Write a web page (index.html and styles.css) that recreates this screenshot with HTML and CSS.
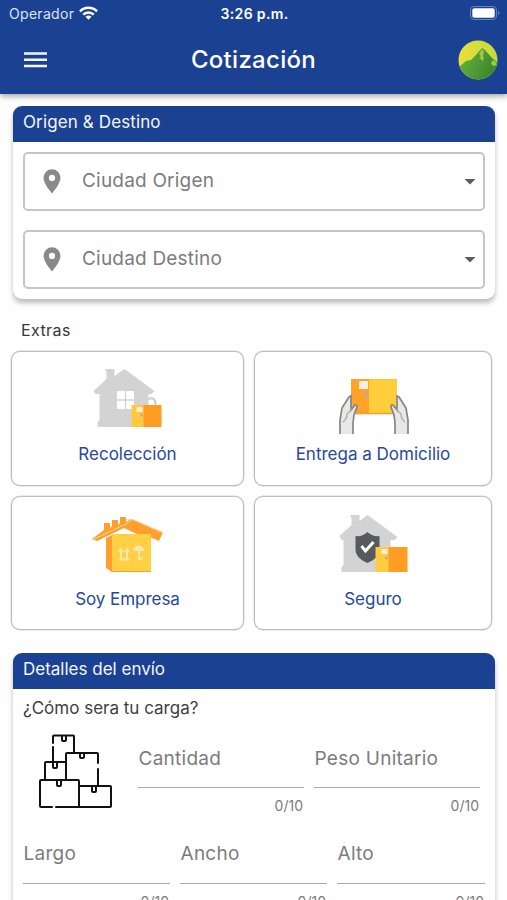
FILE: index.html
```html
<!DOCTYPE html>
<html lang="es">
<head>
<meta charset="utf-8">
<meta name="viewport" content="width=device-width, initial-scale=1">
<title>Cotización</title>
<link rel="stylesheet" href="styles.css">
</head>
<body>
<header class="top">
  <div class="status">
    <div class="carrier"><span>Operador</span>
      <svg class="wifi" width="19" height="14" viewBox="0 0 19 14" fill="none" stroke="#fff" stroke-width="2.5"><path d="M1 5.300C5.500.6 13.500.6 18 5.300"/><path d="M4.200 8.600c2.900-2.900 7.700-2.900 10.600 0"/><path d="M6.500 10.700q3-2.500 6 0l-3 3.100z" fill="#fff" stroke="none"/></svg>
    </div>
    <span class="time">3:26 p.m.</span>
    <svg class="battery" width="30" height="14" viewBox="0 0 30 14"><rect x=".5" y=".5" width="26" height="13" rx="3.500" fill="none" stroke="#6582bd"/><rect x="2.300" y="2.300" width="22.400" height="9.400" rx="2" fill="#fff"/><path d="M28 5v4q1.500-.5 1.500-2T28 5z" fill="#6582bd"/></svg>
  </div>
  <div class="bar">
    <svg class="menu" width="23" height="16" viewBox="0 0 23 16" fill="#f4f7fd"><path d="M0 .3h23v2.500H0zM0 6.500h23V9H0zM0 12.700h23v2.500H0z"/></svg>
    <h1>Cotización</h1>
    <svg class="avatar" width="40" height="40" viewBox="0 0 40 40"><defs><clipPath id="disc"><circle cx="20" cy="20" r="19.500"/></clipPath><linearGradient id="hill" x1="0" y1="0" x2="1" y2=".3"><stop offset="0" stop-color="#69b63f"/><stop offset="1" stop-color="#3d862e"/></linearGradient><linearGradient id="sky" x1="0" y1="0" x2="1" y2="0"><stop offset="0" stop-color="#e8df3d"/><stop offset="1" stop-color="#c3d93c"/></linearGradient></defs><g clip-path="url(#disc)"><path fill="url(#sky)" d="M0 0h40v40H0z"/><path fill="url(#hill)" d="M0 28l8-7 5-1 4-4 7-8 3 2 7 8 6 5v17H0z"/><path fill="#a0ca45" d="M24 9l-3 5 2 2-2 2 2 1 1 2 2-2-1-3 1-4zM35 20l-2 3 2 3 4-1-1-3z"/></g></svg>
  </div>
</header>
<main>
  <section class="card route">
    <h2>Origen &amp; Destino</h2>
    <div class="selects">
      <div class="select"><svg width="18" height="25" viewBox="0 0 18 25"><path fill="#898989" fill-rule="evenodd" d="M9 .3A8.500 8.500 0 0 0 .5 8.800C.5 15 9 24.500 9 24.500S17.500 15 17.500 8.800A8.500 8.500 0 0 0 9 .3zm0 5.500a3.100 3.100 0 1 1 0 6.200 3.100 3.100 0 0 1 0-6.200z"/></svg><span class="field-text origin">Ciudad Origen</span><i class="arrow"></i></div>
      <div class="select"><svg width="18" height="25" viewBox="0 0 18 25"><path fill="#898989" fill-rule="evenodd" d="M9 .3A8.500 8.500 0 0 0 .5 8.800C.5 15 9 24.500 9 24.500S17.500 15 17.500 8.800A8.500 8.500 0 0 0 9 .3zm0 5.500a3.100 3.100 0 1 1 0 6.200 3.100 3.100 0 0 1 0-6.200z"/></svg><span class="field-text destination">Ciudad Destino</span><i class="arrow"></i></div>
    </div>
  </section>

  <h3 class="extras-title">Extras</h3>
  <section class="tiles">
    <div class="tile">
      <svg width="100" height="80" viewBox="-2.500 0 100 80"><path fill="#d3d3d3" d="M17 71v-5l2-2V38h-4l-2-3 13-12v-7l-1-1v-2h9v7l10-7 30 22-3 3h-3v33z"/><path fill="#fff" d="M36.500 35h17v18h-17z"/><path d="M45 35v18M36.500 44h17" stroke="#d3d3d3" stroke-width="1.300"/><path d="M68 43q7-3 7 6" fill="none" stroke="#cacaca" stroke-width="2"/><path fill="#ffc83e" d="M51 49h12v22H51z"/><path fill="#ff9d22" d="M63 49h18v22H63z"/><path fill="#f5eedc" d="M56 51h6v5h-6z"/><circle cx="61" cy="59" r="1.500" fill="#bdae90"/></svg>
      <span>Recolección</span>
    </div>
    <div class="tile">
      <svg width="100" height="80" viewBox="-2 -19 100 80"><path fill="#ffa329" d="M26 4h19v35H26z"/><path fill="#ffce3c" d="M44 4h28v35H44z"/><path stroke="#ff9c2c" stroke-width="1.500" d="M26 38.500h46"/><path stroke="#f3bd31" stroke-dasharray="3 2" d="M45 4.500h27"/><path fill="#f4efe6" d="M34 6h9v8h-9z"/><path fill="#b8aaa0" d="M39 18h4v4h-4z"/><g id="hand"><path fill="#e8e8e8" d="M15 59V45l2-12 7-11 2-1v14l4-5q2-1 2 2l-3 8-1 8v11z"/><path fill="none" stroke="#858585" stroke-width="1.700" d="M15 59V45l2-12 7-11 2-1v14l4-5q2-1 2 2l-3 8-1 8v11"/><path d="M18 47q4-3 4-8l5-5" fill="none" stroke="#aaa" stroke-width="1.300"/></g><use href="#hand" transform="matrix(-1 0 0 1 98 0)"/></svg>
      <span>Entrega a Domicilio</span>
    </div>
    <div class="tile">
      <svg width="100" height="80" viewBox="-2 -9 100 80"><path fill="#ff9f2f" d="M26 28l6-3v37l-6-4zM12 29l12-9v-7h6v5l2-2v-6h6v5l2-2V7h6v5l5-3 32 13-4 9-9-4H53l-9-9-27 13z"/><path fill="#fff" d="M44 18l13 6H34z"/><path fill="#ffd044" d="M32 24h39v38H32z"/><path d="M12 30l34-16 6-4M46 10l6-1 31 14" fill="none" stroke="#ffd7a0" stroke-width="1"/><path stroke="#ff9f2f" d="M31 61.500h40"/><g fill="none" stroke="#f4e7ab" stroke-width="2"><path d="M41 49V39m6 10V39m-8 3l2-3 2 3m2 0l2-3 2 3M39 49.500h10"/><path d="M59 38v11q3 1 3-2"/></g><path d="M53 41q0-5 5.500-5.500Q64 36 64 41z" fill="#f4e7ab"/></svg>
      <span class="empresa">Soy Empresa</span>
    </div>
    <div class="tile">
      <svg width="100" height="80" viewBox="-2.500 -9 100 80"><path fill="#d3d3d3" d="M16 62v-5l2-2V30h-2l-2-4 12-11V8l-1-1V5h9v6l8-6 30 22-3 3h-4v32z"/><path fill="#58595b" d="M42 22q5 5 12 4v13c0 7-5 11-12 14-7-3-12-7-12-14V26q7 1 12-4z"/><path d="M36 36l4 5 8-9" fill="none" stroke="#fff" stroke-width="3"/><path fill="#ffcc3d" d="M50 37h13v25H50z"/><path fill="#ff9d22" d="M63 37h19v25H63z"/><path fill="#f4efdc" d="M56 39h6v5h-6z"/><circle cx="61" cy="48" r="1.600" fill="#b9aa84"/></svg>
      <span>Seguro</span>
    </div>
  </section>

  <section class="card details">
    <h2 class="details-title">Detalles del envío</h2>
    <p class="question">¿Cómo sera tu carga?</p>
    <div class="load">
      <svg width="76" height="76" viewBox="0 0 76 76" fill="none" stroke="#111" stroke-width="2" stroke-linecap="round" stroke-linejoin="round"><path d="M16 10V3.500q0-1 1-1h19q1 0 1 1V20M16 14v15M61 30V21q0-1-1-1H30q-1 0-1 1v26M61 36v17M29 29H9q-1 0-1 1v17M15 74H4q-1 0-1-1V48q0-1 1-1h37q1 0 1 1v26H19M42 53h31q1 0 1 1v19q0 1-1 1H42"/><path d="M25 3v4q0 1 1 1h2q1 0 1-1V3M43 20v4q0 1 1 1h2q1 0 1-1v-4M16 29v5q0 1 1 1h2q1 0 1-1v-5M20 47v5q0 1 1 1h2q1 0 1-1v-5M55 53v5q0 1 1 1h2q1 0 1-1v-5"/></svg>
      <div class="input"><div class="field-text line">Cantidad</div><small>0/10</small></div>
      <div class="input"><div class="field-text line">Peso Unitario</div><small>0/10</small></div>
    </div>
    <div class="sizes">
      <div class="input"><div class="field-text line">Largo</div><small>0/10</small></div>
      <div class="input"><div class="field-text line">Ancho</div><small>0/10</small></div>
      <div class="input"><div class="field-text line">Alto</div><small>0/10</small></div>
    </div>
  </section>
</main>
</body>
</html>
```
FILE: styles.css
```css
* { box-sizing: border-box; }
body { margin: 0; width: 507px; height: 900px; overflow: hidden; background: #fefefe; font-family: Inter, "Liberation Sans", sans-serif; }
h1, h2, h3, p { margin: 0; }
svg { display: block; flex: none; }
.top { height: 94px; background: #1b4193; color: #fff; box-shadow: 0 2px 6px rgba(0,0,0,.38); }
.status { height: 28px; display: grid; grid-template-columns: 1fr auto 1fr; align-items: center; padding: 0 7px 2px 9px; }
.carrier { display: flex; align-items: center; gap: 5px; font-size: 14px; letter-spacing: .3px; color: #dce5f7; }
.time { font-size: 14px; font-weight: 600; letter-spacing: .35px; }
.battery { justify-self: end; }
.bar { height: 64px; display: grid; grid-template-columns: 1fr auto 1fr; align-items: center; padding: 0 9px 0 9px; }
.bar h1 { font-size: 24px; font-weight: 500; letter-spacing: .3px; line-height: 28px; margin-top: -1px; }
.menu { margin-left: 15px; }
.avatar { justify-self: end; }
main { padding: 12px 12px 0 13px; }
.card { width: 482px; border-radius: 9px; background: #fff; box-shadow: 0 4px 5px rgba(0,0,0,.26); }
.card h2 { height: 36px; padding: 0 10px 3px; line-height: 33px; border-radius: 9px 9px 0 0; background: #1b4193; color: #f4f7ff; font-size: 17px; font-weight: 400; letter-spacing: .12px; }
.card .details-title { letter-spacing: 0; }
.route { height: 193px; }
.selects { display: grid; gap: 19px; padding: 10px 10px 0; }
.select { height: 59px; display: flex; align-items: center; padding: 0 7px 0 18px; border: 2px solid #c6c6c6; border-radius: 5px; }
.field-text { color: #7c7c7c; font-size: 19px; letter-spacing: .27px; }
.select .field-text { margin: -2px 0 0 21px; flex: 1; letter-spacing: .2px; }
.arrow { width: 12px; height: 6px; background: #5d5d5d; clip-path: polygon(0 0,100% 0,50% 100%); }
.extras-title { height: 52px; padding: 19px 0 0 8px; line-height: 24px; font-size: 16px; font-weight: 400; letter-spacing: .4px; color: #363636; }
.tiles { display: grid; grid-template-columns: 233px 238px; grid-auto-rows: 134.500px; gap: 10px; margin-left: -2px; }
.tile { display: flex; flex-direction: column; align-items: center; padding-top: 4px; border: 1px solid #bebebe; border-radius: 9px; background: #fff; box-shadow: 0 0 0 .5px #d5d5d5; color: #27499a; font-size: 17px; line-height: 24px; }
.tile svg { margin-bottom: 6px; }
.empresa { letter-spacing: -.05px; }
.details { margin-top: 23px; height: 270px; }
.question { height: 39px; padding-left: 10px; line-height: 39px; font-size: 17px; color: #404040; }
.load { display: grid; grid-template-columns: 90px 166px 166px; column-gap: 10px; padding-left: 25px; height: 95px; }
.load > svg { margin: 5px 14px 0 -1px; }
.sizes { display: grid; grid-template-columns: 147px 147px 148px; gap: 10px; padding-left: 10px; }
.line { height: 60px; line-height: 61px; border-bottom: 1px solid #a8a8a8; }
.sizes .line { height: 61px; }
.input .line { text-indent: .5px; }
.input small { display: block; padding-right: 1px; text-align: right; font-size: 14px; line-height: 36px; color: #7c7c7c; }
```
